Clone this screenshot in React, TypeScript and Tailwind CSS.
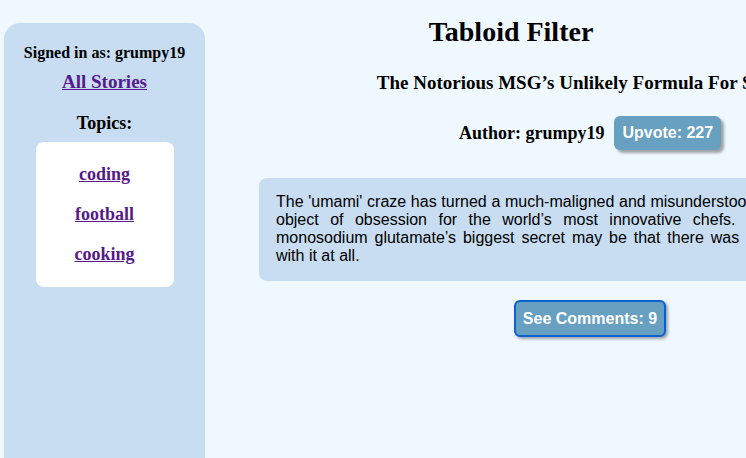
const serif = { fontFamily: '"Liberation Serif", "Times New Roman", serif' };
const sans = { fontFamily: '"Liberation Sans", Arial, sans-serif' };

const topics = ['coding', 'football', 'cooking'];

function Sidebar() {
  return (
    <aside
      className="ml-[4px] mt-[23px] w-[201px] shrink-0 rounded-t-[16px] bg-[#c8ddf1] pt-[21px] text-center"
      style={serif}
    >
      <div className="text-[16px] font-bold leading-[18px] text-black">Signed in as: grumpy19</div>
      <a href="#" className="mt-[10px] block text-[19px] font-bold leading-[20px] text-[#551a8b] underline">
        All Stories
      </a>
      <div className="mt-[21px] text-[18px] font-bold leading-[20px] text-black">Topics:</div>
      <div className="mx-auto mt-[9px] flex w-[138px] flex-col items-center gap-[19px] rounded-[8px] bg-white py-[22px]">
        {topics.map((t) => (
          <a key={t} href="#" className="text-[18px] font-bold leading-[21px] text-[#551a8b] underline">
            {t}
          </a>
        ))}
      </div>
    </aside>
  );
}

function Story() {
  return (
    <div className="flex w-[662px] shrink-0 flex-col items-center">
      <h2 className="mt-[21px] whitespace-nowrap text-[19px] font-bold leading-[24px] text-black" style={serif}>
        The Notorious MSG’s Unlikely Formula For Success
      </h2>
      <div className="mt-[21px] flex items-center gap-[10px]">
        <span className="text-[18px] font-bold text-black" style={serif}>
          Author: grumpy19
        </span>
        <button
          className="h-[34px] rounded-[6px] bg-[#68a0c1] px-[8px] text-[16px] font-bold text-white shadow-[3px_3px_3px_rgba(0,0,0,0.35)]"
          style={sans}
        >
          Upvote: 227
        </button>
      </div>
      <div
        className="mt-[28px] w-full rounded-[8px] bg-[#c8ddf1] px-[17px] pb-[16px] pt-[15px] text-justify text-[16px] leading-[18px] text-black"
        style={sans}
      >
        The 'umami' craze has turned a much-maligned and misunderstood food additive into an object of obsession for
        the world’s most innovative chefs. But as it turns out, monosodium glutamate’s biggest secret may be that
        there was never anything wrong with it at all.
      </div>
      <button
        className="mt-[19px] h-[37px] rounded-[6px] border-2 border-[#0a62d0] bg-[#68a0c1] px-[7px] text-[16px] font-bold text-white shadow-[2px_2px_3px_rgba(0,0,0,0.35)]"
        style={sans}
      >
        See Comments: 9
      </button>
    </div>
  );
}

export default function App() {
  return (
    <div className="flex h-[458px] w-[746px] overflow-hidden bg-[#f0f8ff]">
      <Sidebar />
      <main className="flex shrink-0 flex-col">
        <h1
          className="ml-[220px] mt-[14px] w-[172px] whitespace-nowrap text-center text-[28px] font-bold leading-[36px] text-black"
          style={serif}
        >
          Tabloid Filter
        </h1>
        <div className="ml-[54px]">
          <Story />
        </div>
      </main>
    </div>
  );
}
